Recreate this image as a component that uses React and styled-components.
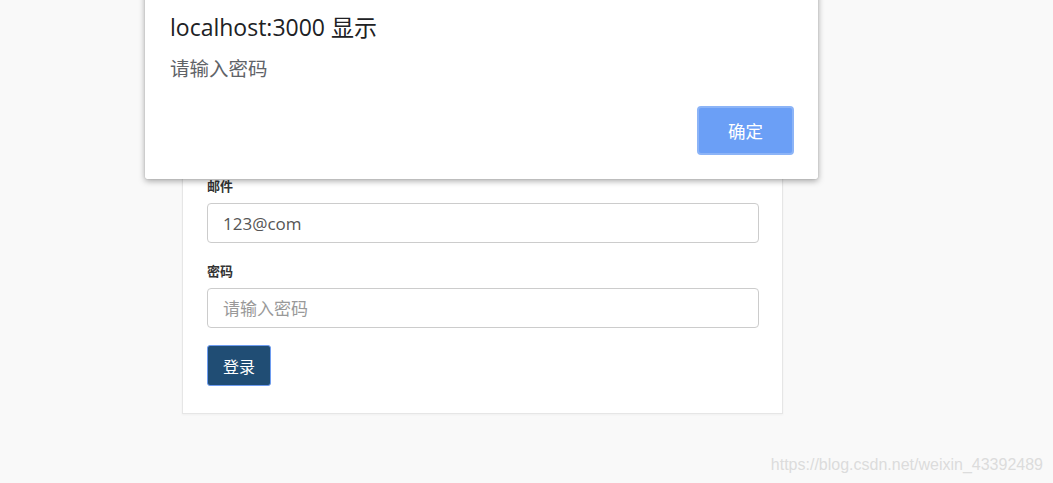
import React from 'react';
import styled, { createGlobalStyle } from 'styled-components';

const GlobalStyle = createGlobalStyle`
  html, body {
    margin: 0;
    padding: 0;
    background: #f9f9f9;
    font-family: "Open Sans", "Noto Sans CJK SC", sans-serif;
  }
  #root {
    position: relative;
    width: 1053px;
    height: 483px;
    overflow: hidden;
  }
`

const Page = styled.div`
  display: flex;
  align-items: flex-start;
  padding: 150px 0 0 182px;
  height: 483px;
  box-sizing: border-box;
`

const Card = styled.form`
  width: 601px;
  box-sizing: border-box;
  background: #fff;
  border: 1px solid #e6e6e6;
  box-shadow: 0 1px 2px rgba(0, 0, 0, 0.04);
  padding: 26px 24px 27px 24px;
  display: flex;
  flex-direction: column;
`

const Field = styled.div`
  display: flex;
  flex-direction: column;
  margin-bottom: 19px;
  &:last-of-type {
    margin-bottom: 17px;
  }
`

const Label = styled.label`
  font-family: "Noto Sans CJK SC", sans-serif;
  font-size: 13px;
  font-weight: 700;
  color: #333;
  line-height: 18px;
  margin-bottom: 8px;
`

const Input = styled.input`
  width: 552px;
  height: 40px;
  box-sizing: border-box;
  border: 1px solid #ccc;
  border-radius: 4px;
  padding: 0 15px;
  font-family: "Open Sans", "Noto Sans CJK SC", sans-serif;
  font-size: 17px;
  color: #555;
  outline: none;
  &::placeholder {
    color: #999;
    font-family: "Noto Sans CJK SC", sans-serif;
  }
`

const Submit = styled.button`
  align-self: flex-start;
  width: 64px;
  height: 41px;
  background: #204d74;
  border: 1px solid #6e9cf0;
  border-radius: 3px;
  color: #fff;
  font-family: "Noto Sans CJK SC", sans-serif;
  font-size: 16px;
  padding: 0;
`

const Dialog = styled.div`
  position: absolute;
  left: 145px;
  top: -10px;
  width: 673px;
  height: 189px;
  box-sizing: border-box;
  background: #fff;
  border-radius: 2px;
  box-shadow: 0 2px 6px rgba(0, 0, 0, 0.35), 0 0 1px rgba(0, 0, 0, 0.3);
  padding: 21px 24px 0 25px;
  display: flex;
  flex-direction: column;
`

const DialogTitle = styled.div`
  font-family: "Open Sans", "Noto Sans CJK SC", sans-serif;
  font-size: 23px;
  color: #202124;
  line-height: 32px;
`

const DialogMessage = styled.div`
  font-family: "Noto Sans CJK SC", sans-serif;
  font-size: 19.5px;
  color: #5f6368;
  line-height: 28px;
  margin-top: 11px;
`

const DialogActions = styled.div`
  display: flex;
  justify-content: flex-end;
  margin-top: 24px;
`

const OkButton = styled.button`
  width: 97px;
  height: 49px;
  box-sizing: border-box;
  background: #6b9ff6;
  border: 2px solid #8cb4f7;
  border-radius: 4px;
  color: #fff;
  font-family: "Noto Sans CJK SC", sans-serif;
  font-size: 17.5px;
  padding: 0;
`

const Watermark = styled.div`
  position: absolute;
  right: 10px;
  bottom: 9px;
  font-family: "Liberation Sans", sans-serif;
  font-size: 16px;
  color: #dcdcdc;
`

export default function App() {
  return (
    <>
      <GlobalStyle />
      <Page>
        <Card>
          <Field>
            <Label>邮件</Label>
            <Input defaultValue="123@com" />
          </Field>
          <Field>
            <Label>密码</Label>
            <Input type="password" placeholder="请输入密码" />
          </Field>
          <Submit type="button">登录</Submit>
        </Card>
      </Page>
      <Dialog>
        <DialogTitle>localhost:3000 显示</DialogTitle>
        <DialogMessage>请输入密码</DialogMessage>
        <DialogActions>
          <OkButton>确定</OkButton>
        </DialogActions>
      </Dialog>
      <Watermark>https://blog.csdn.net/weixin_43392489</Watermark>
    </>
  );
}
